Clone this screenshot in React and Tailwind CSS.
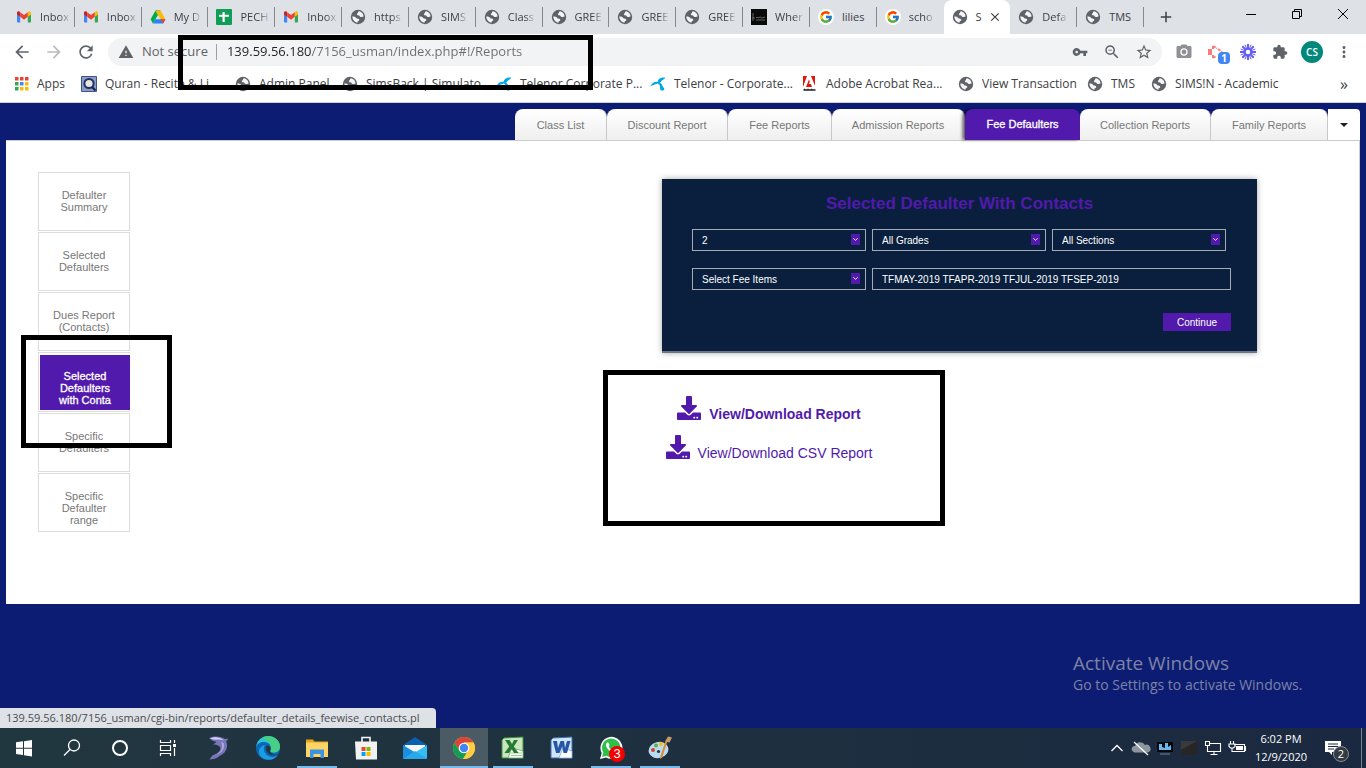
import React from "react";
import {
  MdArrowBack,
  MdArrowForward,
  MdRefresh,
  MdWarning,
  MdVpnKey,
  MdZoomOut,
  MdStarBorder,
  MdExtension,
  MdMoreVert,
  MdClose,
  MdAdd,
  MdCameraAlt,
} from "react-icons/md";
import { FcGoogle } from "react-icons/fc";
import { FaDownload } from "react-icons/fa";

function Globe() {
  return (
    <svg viewBox="0 0 16 16" className="size-4 shrink-0" aria-hidden="true">
      <circle cx="8" cy="8" r="7.2" fill="#5f6368" />
      <path
        d="M9.3 2.2 C8 2.6 7.7 3.4 8.1 4 C7.2 4.3 6.6 5 7 5.8 C7.6 6.7 9 6.3 9.6 7 C10 7.6 10.6 8.3 11.6 8 L13.6 7.4 C13.4 4.8 11.6 2.7 9.3 2.2 Z M2.3 7.6 C2.4 10.9 4.8 13.4 7.6 13.7 C7.4 12.8 7.6 12.4 8.4 12 C9.3 11.5 9.6 10.6 8.8 9.9 C8 9.2 7 9.7 6.2 8.9 C5.4 8 4.3 7.4 2.3 7.6 Z"
        fill="#f4f5f6"
      />
    </svg>
  );
}

function Gmail() {
  return (
    <svg viewBox="0 0 16 16" className="size-4 shrink-0" aria-hidden="true">
      <path d="M1 4.500v8c0 .6.4 1 1 1h2.200V7.600z" fill="#4285f4" />
      <path d="M15 4.500v8c0 .6-.4 1-1 1h-2.200V7.600z" fill="#34a853" />
      <path d="M4.200 4v3.800L1 5.400V4c0-1.500 1.600-2.200 2.700-1.300z" fill="#c5221f" />
      <path d="M11.800 4v3.800L15 5.400V4c0-1.500-1.600-2.200-2.700-1.300z" fill="#fbbc04" />
      <path d="M4.200 3.200L8 6.100l3.800-2.900v4.600L8 10.700 4.200 7.800z" fill="#ea4335" />
    </svg>
  );
}

function Drive() {
  return (
    <svg viewBox="0 0 16 16" className="size-4 shrink-0" aria-hidden="true">
      <path d="M5.500 1.500h5L8 6z" fill="#188038" />
      <path d="M5.500 1.500L.6 10.200l2.300 4.300L8 6z" fill="#00ac47" />
      <path d="M10.500 1.500L15.400 10.200h-5L5.700 2z" fill="#ffba00" />
      <path d="M5.400 10.200h10l-2.300 4.300H2.900z" fill="#2684fc" />
      <path d="M10.400 10.200h5l-2.300 4.300z" fill="#ea4335" />
    </svg>
  );
}

function Sheets() {
  return (
    <svg viewBox="0 0 16 16" className="size-4 shrink-0" aria-hidden="true">
      <rect width="16" height="16" rx="1" fill="#0f9d58" />
      <path d="M6.500 3h2.200v2.700H13v2H8.700V13H6.500V7.700H3v-2h3.500z" fill="#fff" />
    </svg>
  );
}

function DarkThumb() {
  return (
    <svg viewBox="0 0 16 16" className="size-4 shrink-0" aria-hidden="true">
      <rect width="16" height="16" fill="#0a0a0a" />
      <path d="M2 4v8M1 9h3M5 9l1-1 1 1 2-1 2 1 3-1M5 11h9" stroke="#777" strokeWidth=".8" fill="none" />
    </svg>
  );
}

function GoogleDisc() {
  return (
    <span className="flex size-4 shrink-0 items-center justify-center rounded-full bg-white">
      <FcGoogle className="size-3.5" />
    </span>
  );
}

function AppsGrid() {
  const colors = ["#ea4335", "#ea4335", "#ea4335", "#34a853", "#4285f4", "#fbbc04", "#34a853", "#fbbc04", "#fbbc04"];
  return (
    <svg viewBox="0 0 14 14" className="size-3.5 shrink-0" aria-hidden="true">
      {colors.map((c, i) => (
        <rect key={i} x={(i % 3) * 5} y={Math.floor(i / 3) * 5} width="3.500" height="3.500" fill={c} />
      ))}
    </svg>
  );
}

function Quran() {
  return (
    <svg viewBox="0 0 16 16" className="size-4 shrink-0" aria-hidden="true">
      <rect width="16" height="16" rx="1" fill="#3c5488" />
      <rect x="1" y="1" width="14" height="14" fill="#8c9cc4" />
      <circle cx="8" cy="7.500" r="5.600" fill="#1d3266" />
      <circle cx="8" cy="7.500" r="3.600" fill="#e9e6dc" />
      <path d="M11 11l3.500 3.500" stroke="#13234d" strokeWidth="2" />
    </svg>
  );
}

function Telenor() {
  return (
    <svg viewBox="0 0 16 16" className="size-4 shrink-0" aria-hidden="true" fill="#00a7e8">
      <path d="M.3 10.500C1.500 7 5 4.800 9 6 8 8.800 3.500 8 .3 10.500z" />
      <path d="M7.800 6.800C7.300 3.200 10.500 1 15.200 1.500 14.500 3.500 12.300 3.500 10.800 6.200z" />
      <path d="M8.300 6c3.500.5 3.700 4 6 6.500.7 2-3.300 3.200-4 1C9.800 11 10.500 9 8 7.800z" />
    </svg>
  );
}

function Adobe() {
  return (
    <svg viewBox="0 0 16 16" className="size-4 shrink-0" aria-hidden="true">
      <rect x="1" y="0" width="12" height="11" fill="#e1140b" />
      <path d="M5 0h4l4.500 11H10L8.900 8H6.800l1-2.300L7 3.500 4 11H1z" fill="#fff" />
      <path d="M1.500 14h12M2.500 12.800v2M6 12.800v2M9.500 12.800v2" stroke="#222" strokeWidth="1.400" />
    </svg>
  );
}

const browserTabs = [
  { title: "Inbox", icon: <Gmail /> },
  { title: "Inbox", icon: <Gmail /> },
  { title: "My D", icon: <Drive /> },
  { title: "PECH", icon: <Sheets /> },
  { title: "Inbox", icon: <Gmail /> },
  { title: "https", icon: <Globe /> },
  { title: "SIMS", icon: <Globe /> },
  { title: "Class", icon: <Globe /> },
  { title: "GREE", icon: <Globe /> },
  { title: "GREE", icon: <Globe /> },
  { title: "GREE", icon: <Globe /> },
  { title: "Wher", icon: <DarkThumb /> },
  { title: "lilies", icon: <GoogleDisc />, whole: true },
  { title: "scho", icon: <GoogleDisc />, last: true },
  { title: "S", icon: <Globe />, active: true },
  { title: "Defa", icon: <Globe /> },
  { title: "TMS", icon: <Globe />, whole: true },
];

function BrowserTab({ tab }) {
  if (tab.active) {
    return (
      <div className="flex h-[34px] items-center rounded-t-lg bg-white pl-2">
        {tab.icon}
        <span className="ml-2 w-3 text-[11px]">{tab.title}</span>
        <button type="button" aria-label="Close tab" className="text-[#3c4043]">
          <MdClose className="size-3.5" />
        </button>
      </div>
    );
  }
  return (
    <button
      type="button"
      className={`flex h-5 items-center gap-2 self-center whitespace-nowrap pl-2 text-[11px] ${tab.last ? "" : "border-r border-[#85888c]"}`}
    >
      {tab.icon}
      <span className={tab.whole ? "" : "[mask-image:linear-gradient(90deg,#000_65%,rgba(0,0,0,0.2))]"}>{tab.title}</span>
    </button>
  );
}

function TabStrip() {
  return (
    <div className="flex h-[34px] items-stretch bg-[#dee1e6] pl-2 text-[#3c4043]">
      <div className="grid w-[1136px] grid-cols-[repeat(17,minmax(0,1fr))]">
        {browserTabs.map((t, i) => (
          <BrowserTab key={i} tab={t} />
        ))}
      </div>
      <button type="button" aria-label="New tab" className="flex w-11 items-center justify-center">
        <MdAdd className="size-[18px]" />
      </button>
      <div className="ml-auto flex h-7 text-black">
        <button type="button" aria-label="Minimize" className="flex w-[46px] items-center justify-center">
          <svg viewBox="0 0 10 10" className="size-2.5"><path d="M0 5.500h10" stroke="currentColor" /></svg>
        </button>
        <button type="button" aria-label="Restore" className="flex w-[46px] items-center justify-center">
          <svg viewBox="0 0 10 10" className="size-2.5" fill="none" stroke="currentColor">
            <path d="M.5 2.500h7v7h-7zM2.500 2.500v-2h7v7h-2" />
          </svg>
        </button>
        <button type="button" aria-label="Close" className="flex w-[46px] items-center justify-center">
          <svg viewBox="0 0 10 10" className="size-2.5"><path d="M0 0l10 10M10 0L0 10" stroke="currentColor" /></svg>
        </button>
      </div>
    </div>
  );
}

function Toolbar() {
  return (
    <div className="flex h-9 items-center bg-white pr-1.5 text-[#5f6368]">
      <button type="button" aria-label="Back" className="ml-3 mr-3"><MdArrowBack className="size-5" /></button>
      <button type="button" aria-label="Forward" className="mr-3 text-[#babcbe]"><MdArrowForward className="size-5" /></button>
      <button type="button" aria-label="Reload"><MdRefresh className="size-5" /></button>
      <div className="ml-3 flex h-7 min-w-0 flex-1 items-center rounded-full bg-[#f1f3f4] pl-2.5 pr-0.5">
        <MdWarning className="size-4 shrink-0" />
        <span className="ml-2 whitespace-nowrap text-[13px]">Not secure</span>
        <span className="ml-2 h-4 w-px shrink-0 bg-[#9aa0a6]" />
        <input
          aria-label="Address"
          defaultValue="139.59.56.180/7156_usman/index.php#!/Reports"
          className="ml-2.5 min-w-0 flex-1 bg-[linear-gradient(90deg,#202124_84px,#6b6e72_84px)] bg-clip-text text-[13px] text-transparent outline-none"
        />
        <button type="button" aria-label="Passwords" className="flex w-8 justify-center"><MdVpnKey className="size-4" /></button>
        <button type="button" aria-label="Zoom" className="flex w-8 justify-center"><MdZoomOut className="size-[18px]" /></button>
        <button type="button" aria-label="Bookmark" className="flex w-8 justify-center"><MdStarBorder className="size-[18px]" /></button>
      </div>
      <div className="ml-1.5 flex items-center">
        <button type="button" aria-label="Screenshot" className="flex w-8 justify-center text-[#8f9194]"><MdCameraAlt className="size-[18px]" /></button>
        <button type="button" aria-label="Recorder" className="relative flex w-8 justify-center">
          <svg viewBox="0 0 16 16" className="size-4" aria-hidden="true">
            <path d="M0 5h4v6H0z" fill="#fa7b7b" />
            <path d="M5 2l4 2.500M5 2v3M10 5l4 3M5 14v-3M5 14l3-2" stroke="#fa7b7b" strokeWidth="2" strokeDasharray="3 1" />
          </svg>
          <span className="absolute left-[18px] top-2 flex h-3 w-3 items-center justify-center rounded-sm bg-[#4285f4] text-[10px] font-bold text-white">1</span>
        </button>
        <button type="button" aria-label="Loom" className="flex w-8 justify-center">
          <svg viewBox="0 0 16 16" className="size-4" aria-hidden="true" stroke="#625df5" strokeWidth="2">
            <path d="M8 0v5M8 11v5M0 8h5M11 8h5M2.300 2.300l3.500 3.500M10.200 10.200l3.500 3.500M13.700 2.300l-3.500 3.500M5.800 10.200l-3.500 3.500" />
            <path d="M5 .7l1.800 4.500M9.200 10.800l1.800 4.500M11 .7L9.200 5.200M6.800 10.800L5 15.300M.7 5l4.500 1.800M10.800 9.200l4.500 1.800M15.300 5l-4.500 1.800M5.200 9.200L.7 11" strokeWidth="1" />
            <circle cx="8" cy="8" r="3" fill="none" strokeWidth="1.500" />
          </svg>
        </button>
        <button type="button" aria-label="Extensions" className="flex w-8 justify-center"><MdExtension className="size-4" /></button>
        <button type="button" aria-label="Profile" className="flex w-8 justify-center">
          <span className="flex size-[22px] items-center justify-center rounded-full bg-[#00897b] text-[10px] font-semibold text-white">CS</span>
        </button>
        <button type="button" aria-label="Menu" className="flex w-8 justify-center"><MdMoreVert className="size-[18px]" /></button>
      </div>
    </div>
  );
}

const bookmarks = [
  { label: "Apps", icon: <AppsGrid />, w: "w-[66px]" },
  { label: "Quran - Recite & Li...", icon: <Quran />, w: "w-[154px]" },
  { label: "Admin Panel", icon: <Globe />, w: "w-[107px]" },
  { label: "SimsBack | Simulato...", icon: <Globe />, w: "w-[154px]" },
  { label: "Telenor Corporate P...", icon: <Telenor />, w: "w-[154px]" },
  { label: "Telenor - Corporate...", icon: <Telenor />, w: "w-[152px]" },
  { label: "Adobe Acrobat Rea...", icon: <Adobe />, w: "w-[156px]" },
  { label: "View Transaction", icon: <Globe />, w: "w-[129px]" },
  { label: "TMS", icon: <Globe />, w: "w-[64px]" },
  { label: "SIMS!N - Academic", icon: <Globe />, w: "w-[140px]" },
];

function BookmarksBar() {
  return (
    <nav aria-label="Bookmarks" className="flex h-[33px] items-center border-b border-[#d0d3d8] bg-white pb-1 pl-[15px] pr-[18px] text-xs text-[#3c4043]">
      {bookmarks.map((b) => (
        <a key={b.label} href="#bookmark" className={`flex shrink-0 items-center gap-2 whitespace-nowrap ${b.w}`}>
          {b.icon}
          {b.label}
        </a>
      ))}
      <button type="button" aria-label="More bookmarks" className="ml-auto text-base leading-4">»</button>
    </nav>
  );
}

const reportTabs = [
  { label: "Class List", w: "w-[92px]" },
  { label: "Discount Report", w: "w-[121px]" },
  { label: "Fee Reports", w: "w-[104px]" },
  { label: "Admission Reports", w: "w-[133px]" },
  { label: "Fee Defaulters", w: "w-[115px]", active: true },
  { label: "Collection Reports", w: "w-[131px]" },
  { label: "Family Reports", w: "w-[117px]" },
];

function ReportTabs() {
  return (
    <div className="flex h-[31px] justify-end text-[11px]">
      {reportTabs.map((t) =>
        t.active ? (
          <button
            key={t.label}
            type="button"
            className={`rounded-t-lg bg-[#511aac] pb-px text-white shadow-[-3px_0_3px_rgba(0,0,0,0.5)] [-webkit-text-stroke:0.3px_white] ${t.w}`}
          >
            {t.label}
          </button>
        ) : (
          <button
            key={t.label}
            type="button"
            className={`rounded-t-lg border-r border-[#c8c8c8] bg-linear-to-b from-white to-[#efefef] pt-px text-[#777] ${t.w}`}
          >
            {t.label}
          </button>
        )
      )}
      <button type="button" aria-label="More reports" className="flex w-8 items-center justify-center rounded-tr bg-white">
        <svg viewBox="0 0 8 4" className="h-1 w-2"><path d="M0 0h8L4 4z" fill="#222" /></svg>
      </button>
    </div>
  );
}

const sideItems = [
  "Defaulter Summary",
  "Selected Defaulters",
  "Dues Report (Contacts)",
  "Selected Defaulters with Conta",
  "Specific Defaulters",
  "Specific Defaulter range",
];

function Sidebar() {
  return (
    <nav aria-label="Defaulter reports" className="relative flex w-[92px] shrink-0 flex-col gap-px text-[11px] leading-3">
      {sideItems.map((s) =>
        s.endsWith("Conta") ? (
          <a key={s} href="#report" className="flex h-[60px] border border-r-0 border-[#ddd] pb-px pl-px pt-0.5 text-center text-white">
            <span className="flex-1 bg-[#511aac] px-3 pt-[15px] [-webkit-text-stroke:0.3px_white]">{s}</span>
          </a>
        ) : (
          <a key={s} href="#report" className="h-[59px] border border-[#ddd] px-3 pt-4 text-center text-[#777]">
            {s}
          </a>
        )
      )}
      <div className="pointer-events-none absolute -left-[17px] top-[163px] h-[113px] w-[151px] border-5 border-black" />
    </nav>
  );
}

function Picker({ label, value }) {
  return (
    <label className="relative block w-[174px] shrink-0">
      <span className="sr-only">{label}</span>
      <select className="block h-[22px] w-full appearance-none border border-[#a3abb5] bg-[#091f3d] pl-[9px] pt-0.5 text-[10px] leading-4 text-white">
        <option>{value}</option>
      </select>
      <span className="pointer-events-none absolute right-1.5 top-[5px] flex h-[11px] w-[9px] items-center justify-center bg-[#511aac]">
        <svg viewBox="0 0 5 3" className="h-[3px] w-[5px]"><path d="M.3.3l2.200 2 2.200-2" stroke="#fff" strokeWidth=".9" fill="none" /></svg>
      </span>
    </label>
  );
}

function FilterCard() {
  return (
    <form className="w-[595px] border-b-2 border-[#6b7686] bg-[#091f3d] px-[26px] pb-5 pt-[15px] shadow-[0_0_6px_rgba(0,0,0,0.35)]" onSubmit={(e) => e.preventDefault()}>
      <h1 className="text-center text-[17px] font-bold leading-5 text-[#511aac]">Selected Defaulter With Contacts</h1>
      <div className="mt-[15px] flex gap-1.5 pl-1">
        <Picker label="Report" value="2" />
        <Picker label="Grade" value="All Grades" />
        <Picker label="Section" value="All Sections" />
      </div>
      <div className="mt-[17px] flex gap-1.5 pl-1">
        <Picker label="Fee items" value="Select Fee Items" />
        <input
          aria-label="Selected fee items"
          defaultValue="TFMAY-2019 TFAPR-2019 TFJUL-2019 TFSEP-2019"
          className="h-[22px] min-w-0 flex-1 border border-[#a3abb5] bg-transparent px-[9px] text-[10px] text-white"
        />
      </div>
      <div className="mt-[23px] flex justify-end">
        <button type="submit" className="h-[18px] w-[68px] bg-[#511aac] text-[10px] text-white">Continue</button>
      </div>
    </form>
  );
}

function Downloads() {
  return (
    <div className="mt-[17px] flex h-[156px] w-[342px] flex-col items-center gap-[15px] self-start border-5 border-black bg-white pr-2.5 pt-[21px] text-sm text-[#511aac]">
      <a href="#pdf" className="flex h-6 items-center gap-2 font-bold">
        <FaDownload className="size-6" />
        <span className="mt-3">View/Download Report</span>
      </a>
      <a href="#csv" className="flex h-6 items-center gap-2">
        <FaDownload className="size-6" />
        <span className="mt-3">View/Download CSV Report</span>
      </a>
    </div>
  );
}

const S = ({ children, box = "0 0 24 24" }) => (
  <svg viewBox={box} className="size-6" aria-hidden="true">{children}</svg>
);

const systemApps = [
  { name: "Start", icon: <S><path d="M4 6.300l7-1v6.400H4zM12 5.200l8-1.200v7.700h-8zM4 12.700h7V19l-7-1zM12 12.700h8V20.400l-8-1.200z" fill="#fff" /></S> },
  { name: "Search", icon: <S><circle cx="14" cy="9.500" r="5.500" fill="none" stroke="#fff" strokeWidth="1.300" /><path d="M10 13.500L4 19.500" stroke="#fff" strokeWidth="1.300" /></S> },
  { name: "Cortana", icon: <S><circle cx="12" cy="12" r="7" fill="none" stroke="#fff" strokeWidth="2" /></S> },
  { name: "Task view", icon: <S><path d="M4.500 4v2.500h10V4M4.500 20v-2.500h10V20M4.500 9.500h10v5h-10zM18.500 4v3M18.500 12v8" fill="none" stroke="#fff" strokeWidth="1.200" /><path d="M17 8h3v3h-3z" fill="#fff" /></S> },
];

const pinnedApps = [
  { name: "Dolphin", icon: <S><path d="M2 2C7-.5 14 0 18 3l3.500-.5-2.300 3c2.500 6-1 12.500-7 14.500-1.500 2-4 3-9.700 3.500 1.500-2 2-3.500 4-4.500 5-1.500 8-5 6.500-8C11.500 9 8.500 8.500 6 8.500L9.500 6C6 5 4 4 2 2z" fill="#7a76bb" /><path d="M3 2.300c5-2 10-1 14 2-4-1-9 .5-14-2z" fill="#d5d2f1" /><path d="M14 6c3 5 0 10-4 12 5-1 8-6 6.500-11z" fill="#b5b1e0" /></S> },
  { name: "Edge", icon: <S><circle cx="12" cy="12" r="12" fill="#0c66b7" /><path d="M.2 11C1 4 6 0 12 0c7.500 0 12 5.500 12 10.500 0 4-3 6-6.200 6-3 0-4-1.300-3.300-2.500C16.500 10.500 13 6 8 6 4 6 1 8 .2 11z" fill="#2bc3d2" /><path d="M12 0c7.500 0 12 5.500 12 10.500 0 4-3 6-6.200 6-3 0-4-1.300-3.300-2.500C16.500 9 12 4 6 2 8 .6 10 0 12 0z" fill="#52d36b" opacity=".75" /><path d="M8 11c-1 5 3 10 8 10 2 0 4-.6 5.500-1.500-4 5.500-13 6-17.500 0C1 14 5 9 10 9c-1 .5-1.700 1-2 2z" fill="#1b9de2" /><path d="M10.500 9.500c-1.500 2.500-.5 8 5 9.500 3 .8 5.500 0 7-1.500-2 1.500-5 1.500-7 0-2-1.300-1.500-2.500-1-3.500.8-2-1-4.500-4-4.500z" fill="#21373f" /></S> },
  { name: "File Explorer", run: true, icon: <S><path d="M1 3.500h7l1.500 2H23V21H1z" fill="#e8a413" /><path d="M1 6.500h22V21H1z" fill="#ffd466" /><path d="M5 13.500h14V22h-3.500v-4h-7v4H5z" fill="#3c94df" /></S> },
  { name: "Microsoft Store", icon: <S><path d="M8 6V1.500h8V6" fill="none" stroke="#f5f5f5" strokeWidth="1.600" /><path d="M1 5.500h22V23.500H2z" fill="#f2f2f2" /><path d="M7.500 11h4v4h-4z" fill="#e8492b" /><path d="M12.500 11h4v4h-4z" fill="#7fba00" /><path d="M7.500 16h4v4h-4z" fill="#00a4ef" /><path d="M12.500 16h4v4h-4z" fill="#ffb900" /></S> },
  { name: "Mail", icon: <S><path d="M0 9L12 1l12 8v14H0z" fill="#0a5fae" /><path d="M2 9h20v7H2z" fill="#f4f4f4" /><path d="M0 9l12 7.500L0 23z" fill="#1990df" /><path d="M24 9l-12 7.500L24 23z" fill="#36bdf2" /><path d="M0 23l12-8 12 8z" fill="#2aa9ea" /></S> },
  { name: "Chrome", run: true, focus: true, icon: <S><circle cx="12" cy="12" r="11" fill="#fbc116" /><path d="M2.500 6.500A11 11 0 0 1 21.500 6.500H12L7.200 14.800z" fill="#db4437" /><path d="M2.500 6.500A11 11 0 0 0 11 23l5-8.500-8.800.3z" fill="#0f9d58" /><path d="M12 6.500h9.500A11 11 0 0 1 11 23l5.700-8.500z" fill="#ffcd40" /><circle cx="12" cy="12" r="5.300" fill="#fff" /><circle cx="12" cy="12" r="4.200" fill="#4285f4" /></S> },
  { name: "Excel", run: true, icon: <S><path d="M3 2L22 1v21H1V4z" fill="#c9e6bd" stroke="#3e8e41" /><path d="M11 12l11 3v7H7z" fill="#fff" stroke="#5a9e54" strokeWidth=".7" /><path d="M10 17h11M10 19.500h11" stroke="#9fcb92" /><path d="M4 4h4.500l2.500 4 2-4h4l-4.200 6.500L17.500 17H13l-2.500-4L8 17H3.500l4.700-6.500z" fill="#247a35" /></S> },
  { name: "Word", icon: <S><path d="M3 2L22 1v21H1V4z" fill="#d2e4f7" stroke="#3c70b4" /><path d="M13 12l9 3v7H9z" fill="#fff" stroke="#7a9fd0" strokeWidth=".7" /><path d="M3 5h4l1 7 2.500-7H14l1 7 2-7h3.500L17 17h-3.500l-1.300-6.500L9.500 17H6z" fill="#2458a7" /></S> },
  { name: "WhatsApp", run: true, badge: "3", icon: <S><path d="M1 23L2.700 17A11 11 0 1 1 7 21.400z" fill="#fff" /><path d="M3 21l1.300-4.500A9.200 9.200 0 1 1 7.500 19.700z" fill="#2bc148" /><path d="M8 6.500C6 8 7 11 9.500 13.700S15.500 18 17.500 16c.8-1.300.4-1.800-2-2.800l-1.500 1.200c-2-.8-3.500-2.500-4.200-4L10.500 9 9.300 6.600z" fill="#fff" /></S> },
  { name: "Paint", run: true, icon: <S><ellipse cx="10.500" cy="14" rx="10" ry="8" fill="#b9dcf0" transform="rotate(-15 10.500 14)" /><circle cx="5" cy="14" r="2" fill="#d9412f" /><circle cx="8" cy="9.500" r="2" fill="#5bb544" /><circle cx="13" cy="8" r="2" fill="#f3c022" /><circle cx="10.500" cy="15.500" r="1.600" fill="#21373f" /><path d="M19.500 5L14 22l-2 1 .5-3L17.500 5z" fill="#dd8932" /><path d="M17 5.500L20 .5l4 1-2.500 5z" fill="#c69a6b" /></S> },
];

function TaskButton({ app }) {
  return (
    <button
      type="button"
      aria-label={app.name}
      className={`relative flex h-10 w-12 flex-col items-center justify-center ${app.focus ? "bg-white/20" : ""}`}
    >
      {app.icon}
      {app.badge && (
        <span className="absolute left-[22px] top-[18px] flex size-4 items-center justify-center rounded-full bg-[#f40000] font-[Liberation_Sans] text-[13px] leading-4 text-white">
          {app.badge}
        </span>
      )}
      {app.run && <span className={`absolute bottom-0 h-0.5 bg-[#76b9ed] ${app.focus ? "w-12" : "w-10"}`} />}
    </button>
  );
}

function Tray() {
  return (
    <div className="ml-auto flex items-center text-[11px] text-white">
      <div className="flex items-center">
        <S><path d="M6.500 15L12 9.500l5.500 5.500" fill="none" stroke="#fff" strokeWidth="1.300" /></S>
        <S><path d="M4 15.500a3 3 0 0 1 2-5.500 5.500 5.500 0 0 1 10-1 4 4 0 0 1 3 7.500H6a3 3 0 0 1-2-1z" fill="#8d969f" /><path d="M5 6l14 13" stroke="#fff" strokeWidth="1.200" /></S>
        <S><path d="M4 6h16v10H4z" fill="#05080c" /><path d="M6 14V8h3v3l3 1V7h3v4l3-2v5z" fill="#6fb6e8" /><path d="M7 17h10v2H7z" fill="#45566a" /></S>
        <S><path d="M4 5h16v14H4z" fill="#262626" /><path d="M4 5h16L4 14z" fill="#3a3a3a" /></S>
        <S><path d="M8.500 7.500h11v8h-13v-5M13 15.500v3M9.500 18.500h7M4.500 5.500h4v4h-4zM6.500 9.500v6" fill="none" stroke="#fff" strokeWidth="1.100" /></S>
        <S><path d="M9 8.500h10.500v7H9M19.500 10.500h1v4h-1M5.500 5v3M8.500 5v3M4 8h6v2.500L8.500 12h-3L4 10.500zM7 12v3.500h2" fill="none" stroke="#fff" strokeWidth="1.100" /><path d="M11 10h7v4h-7z" fill="#fff" /></S>
      </div>
      <div className="w-16 text-center leading-[18px]">
        <div>6:02 PM</div>
        <div>12/9/2020</div>
      </div>
      <button type="button" aria-label="Notifications" className="relative flex w-10 items-center justify-center">
        <svg viewBox="0 0 16 16" className="size-4"><path d="M0 1h16v11H7v3l-3-3H0z" fill="#fff" /><path d="M3 4h10M3 6.500h10M3 9h6" stroke="#1b2a3f" /></svg>
        <span className="absolute left-5 top-1.5 flex size-4 items-center justify-center rounded-full border border-[#8a8f96] bg-[#343a42] leading-3 text-white">2</span>
      </button>
      <span className="ml-2 mr-1 h-10 w-px bg-[#7a8490]" />
    </div>
  );
}

export default function App() {
  return (
    <div className="relative flex min-h-screen flex-col font-['Open_Sans','Noto_Sans',sans-serif]">
      <header>
        <TabStrip />
        <Toolbar />
        <BookmarksBar />
      </header>

      <main className="relative flex-1 bg-[#0c1c72] px-1.5 pt-1.5 font-['Liberation_Sans',Arial,sans-serif]">
        <ReportTabs />
        <section className="flex min-h-[464px] border-r border-t border-[#ccc] bg-white pl-8 pt-[31px]">
          <Sidebar />
          <div className="ml-auto mr-[102px] mt-[7px] flex w-[654px] flex-col items-end">
            <FilterCard />
            <Downloads />
          </div>
        </section>
        <aside className="absolute bottom-[33px] right-14 w-[237px] font-['Open_Sans','Noto_Sans',sans-serif] text-[#7c83a5]">
          <p className="text-[19px] leading-6">Activate Windows</p>
          <p className="whitespace-nowrap text-sm leading-5">Go to Settings to activate Windows.</p>
        </aside>
        <div className="absolute bottom-0 left-0 flex h-5 w-[436px] items-center rounded-tr bg-[#dee1e6] px-1.5 font-['Open_Sans','Noto_Sans',sans-serif] text-[11px] text-[#4a4d51]">
          139.59.56.180/7156_usman/cgi-bin/reports/defaulter_details_feewise_contacts.pl
        </div>
      </main>

      <footer className="flex h-10 bg-linear-to-r from-[#21373f] to-[#1b2940]">
        <div className="flex">{systemApps.map((a) => <TaskButton key={a.name} app={a} />)}</div>
        <div className="ml-[3px] flex gap-px">{pinnedApps.map((a) => <TaskButton key={a.name} app={a} />)}</div>
        <Tray />
      </footer>

      <div className="pointer-events-none absolute left-[178px] top-[35px] h-[55px] w-[415px] border-5 border-black" />
    </div>
  );
}
